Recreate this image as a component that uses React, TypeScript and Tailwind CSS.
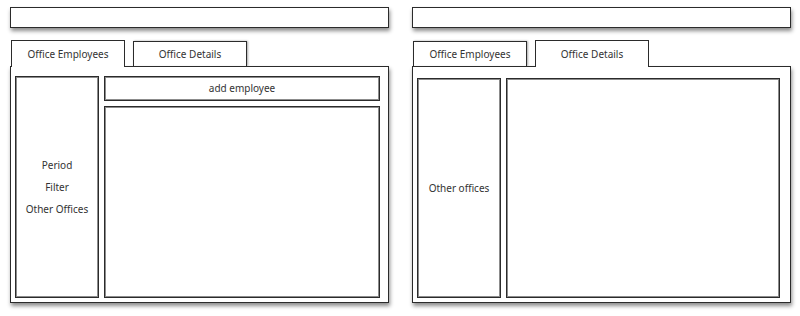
import React from 'react';

const font = { fontFamily: '"Noto Sans", "DejaVu Sans", Verdana, sans-serif' };

const box = 'border border-[#2b2b2b] shadow-[inset_0_0_0_1px_#8c8c8c]';

function Tab({ label, active }: { label: string; active: boolean }) {
  return (
    <div
      className={
        active
          ? 'relative z-10 w-[114px] h-[27px] -mb-[2px] bg-white border-[1.5px] border-b-0 border-[#2b2b2b] flex items-center justify-center text-[#333] pt-[1px]'
          : 'w-[114px] h-[25px] mt-[1px] bg-white border-[1.5px] border-[#2b2b2b] border-b-0 flex items-center justify-center text-[#333] shadow-[1px_0_2px_rgba(0,0,0,0.35)]'
      }
    >
      {label}
    </div>
  );
}

function Mockup({ active, children, pad }: { active: number; children: React.ReactNode; pad: string }) {
  return (
    <div className="w-[379px] flex flex-col">
      <div className="h-[21px] mt-[7px] bg-white border-[1.5px] border-[#2b2b2b] shadow-[1px_3px_4px_rgba(0,0,0,0.45)]" />
      <div className="flex gap-[8px] mt-[12px] pl-[1px]">
        <Tab label="Office Employees" active={active === 0} />
        <Tab label="Office Details" active={active === 1} />
      </div>
      <div className={`h-[237px] bg-white border-[1.5px] border-[#2b2b2b] shadow-[1px_3px_4px_rgba(0,0,0,0.45)] flex gap-[5px] pl-[4px] pb-[4px] ${pad}`}>
        {children}
      </div>
    </div>
  );
}

export default function App() {
  return (
    <div className="w-[800px] h-[316px] bg-white flex gap-[23px] pl-[10px] text-[10px]" style={font}>
      <Mockup active={0} pad="pt-[9px] pr-[8px]">
        <div className={`w-[84px] ${box} flex flex-col items-center justify-center gap-[8px] text-[#333] leading-[14px]`}>
          <span>Period</span>
          <span>Filter</span>
          <span>Other Offices</span>
        </div>
        <div className="flex-1 flex flex-col gap-[5px]">
          <div className={`h-[25px] ${box} flex items-center justify-center text-[#333]`}>
            add employee
          </div>
          <div className={`flex-1 ${box}`} />
        </div>
      </Mockup>
      <Mockup active={1} pad="pt-[11px] pr-[10px]">
        <div className={`w-[84px] ${box} flex items-center justify-center text-[#333]`}>
          Other offices
        </div>
        <div className={`flex-1 ${box}`} />
      </Mockup>
    </div>
  );
}
